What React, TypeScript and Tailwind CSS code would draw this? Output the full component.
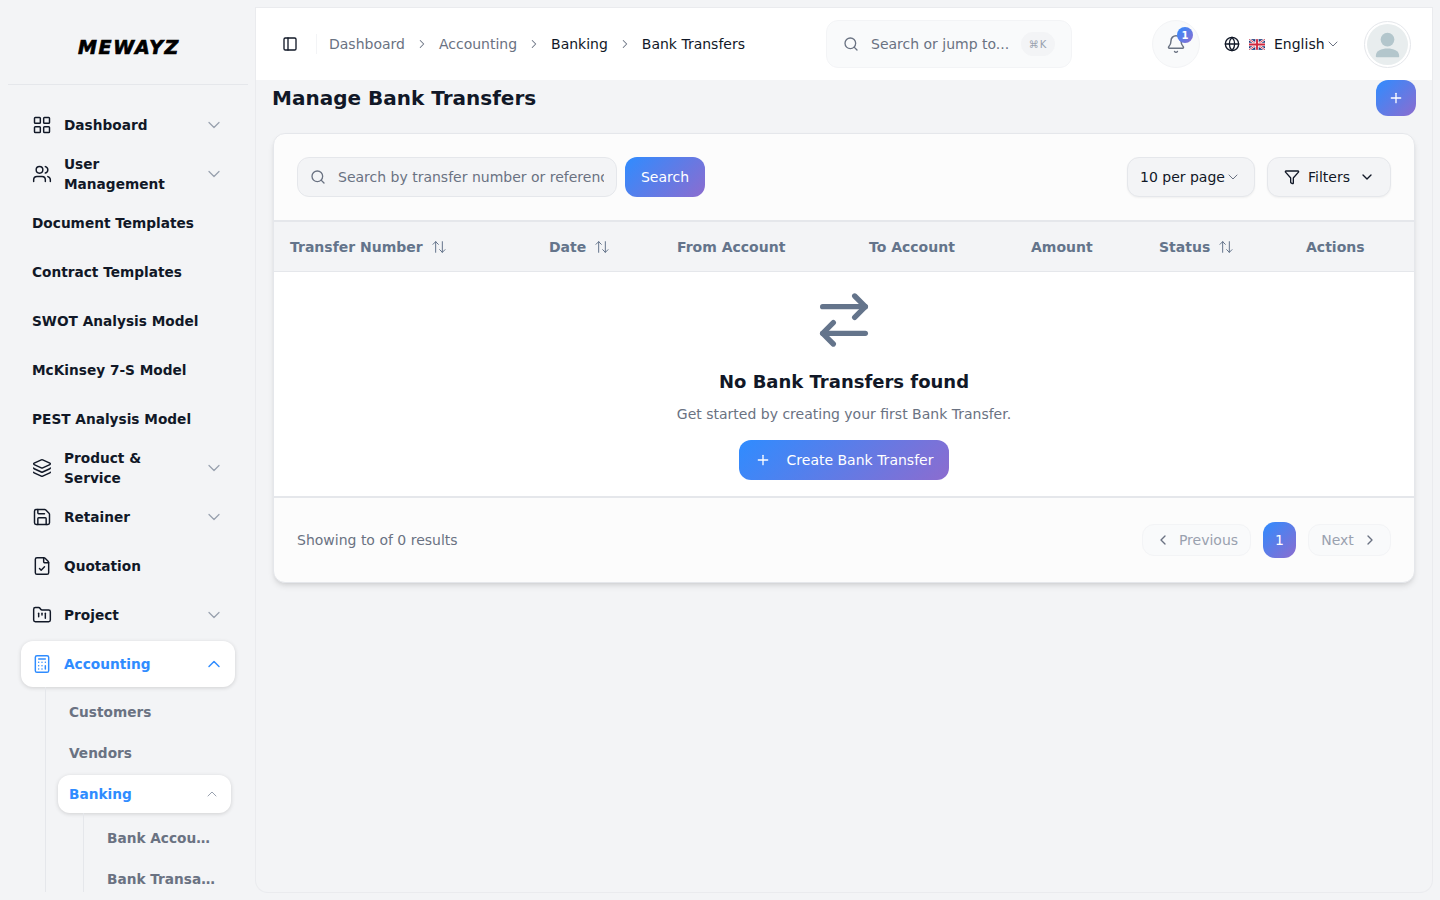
import {
  ArrowRightLeft,
  ArrowUpDown,
  Bell,
  Calculator,
  ChevronDown,
  ChevronLeft,
  ChevronRight,
  ChevronUp,
  FileCheck,
  FolderKanban,
  Funnel,
  Globe,
  Layers,
  LayoutGrid,
  PanelLeft,
  Plus,
  Save,
  Search,
  Users,
} from 'lucide-react';
import type { ReactNode } from 'react';

const gradient = 'bg-[linear-gradient(135deg,#2f8cff,#8c6ccf)]';

const NavItem = ({ icon, label, chevron, narrow }: { icon?: ReactNode; label: string; chevron?: boolean; narrow?: boolean }) => (
  <div className="flex h-[46px] items-center px-[11px] mb-[3px]">
    {icon && <span className="mr-3 flex w-5 shrink-0 justify-center text-[#111827]">{icon}</span>}
    <span className={`text-[13.7px] font-bold leading-5 text-[#111827] ${narrow ? 'w-[110px]' : ''}`}>{label}</span>
    {chevron && <ChevronDown className="ml-auto size-5 text-gray-400" strokeWidth={1.5} />}
  </div>
);

const Sidebar = () => (
  <aside className="flex h-[892px] w-[256px] shrink-0 flex-col overflow-hidden">
    <div className="mx-2 flex h-[85px] shrink-0 items-center justify-center border-b border-gray-200 pt-[10px]">
      <span className="pl-[2px] text-[19px] font-bold italic leading-none tracking-[1.6px] text-black [-webkit-text-stroke:0.7px_black]">MEWAYZ</span>
    </div>
    <nav className="px-[21px] pt-[17px]">
      <NavItem icon={<LayoutGrid className="size-5" strokeWidth={1.75} />} label="Dashboard" chevron />
      <NavItem icon={<Users className="size-5" strokeWidth={1.75} />} label="User Management" chevron narrow />
      <NavItem label="Document Templates" />
      <NavItem label="Contract Templates" />
      <NavItem label="SWOT Analysis Model" />
      <NavItem label="McKinsey 7-S Model" />
      <NavItem label="PEST Analysis Model" />
      <NavItem icon={<Layers className="size-5" strokeWidth={1.75} />} label="Product & Service" chevron narrow />
      <NavItem icon={<Save className="size-5" strokeWidth={1.75} />} label="Retainer" chevron />
      <NavItem icon={<FileCheck className="size-5" strokeWidth={1.75} />} label="Quotation" />
      <NavItem icon={<FolderKanban className="size-5" strokeWidth={1.75} />} label="Project" chevron />
      <div className="flex h-[46px] items-center rounded-xl bg-white px-[11px] shadow-[0_1px_4px_rgba(0,0,0,0.15)]">
        <Calculator className="mr-3 size-5 text-[#2f8cff]" strokeWidth={1.75} />
        <span className="text-[13.7px] font-bold text-[#2f8cff]">Accounting</span>
        <ChevronUp className="ml-auto size-5 text-[#2f8cff]" strokeWidth={1.75} />
      </div>
      <div className="ml-[24px] border-l border-gray-200 pt-[6px] pl-3">
        <div className="mb-[3px] flex h-[38px] items-center pl-[11px] text-[13.7px] font-bold text-gray-500">Customers</div>
        <div className="mb-[3px] flex h-[38px] items-center pl-[11px] text-[13.7px] font-bold text-gray-500">Vendors</div>
        <div className="flex h-[38px] w-[173px] items-center rounded-xl bg-white pl-[11px] shadow-[0_1px_4px_rgba(0,0,0,0.15)]">
          <span className="text-[13.7px] font-bold text-[#2f8cff]">Banking</span>
          <ChevronUp className="ml-auto mr-[11px] size-4 text-gray-400" strokeWidth={1.5} />
        </div>
        <div className="ml-[25px] border-l border-gray-200 pt-[6px] pl-[23px]">
          <div className="mb-[3px] flex h-[38px] w-[108px] items-center text-[13.7px] font-bold text-gray-500">
            <span className="truncate">Bank Accounts</span>
          </div>
          <div className="flex h-[38px] w-[108px] items-center text-[13.7px] font-bold text-gray-500">
            <span className="truncate">Bank Transactions</span>
          </div>
        </div>
      </div>
    </nav>
  </aside>
);

const UkFlag = () => (
  <svg viewBox="0 0 60 40" className="h-[11px] w-4 rounded-[1px]">
    <rect width="60" height="40" fill="#1f3a7a" />
    <path d="M0 0 60 40M60 0 0 40" stroke="#fff" strokeWidth="8" />
    <path d="M0 0 60 40M60 0 0 40" stroke="#d0263c" strokeWidth="3" />
    <path d="M30 0v40M0 20h60" stroke="#fff" strokeWidth="13" />
    <path d="M30 0v40M0 20h60" stroke="#d0263c" strokeWidth="7" />
  </svg>
);

const Header = () => (
  <header className="flex h-[72px] shrink-0 items-center bg-white pl-[26px]">
    <PanelLeft className="size-4 shrink-0 text-[#111827]" />
    <div className="ml-[18px] h-5 border-l border-gray-100" />
    <div className="ml-3 flex w-[416px] shrink-0 items-center whitespace-nowrap text-sm text-[#111827]">
      <span className="text-gray-500">Dashboard</span>
      <ChevronRight className="mx-[9px] size-4 p-px text-gray-500" strokeWidth={1.75} />
      <span className="text-gray-500">Accounting</span>
      <ChevronRight className="mx-[9px] size-4 p-px text-gray-500" strokeWidth={1.75} />
      <span>Banking</span>
      <ChevronRight className="mx-[9px] size-4 p-px text-gray-500" strokeWidth={1.75} />
      <span>Bank Transfers</span>
    </div>
    <div className="ml-[81px] flex h-12 w-[246px] shrink-0 items-center rounded-xl border border-gray-100 bg-gray-50 px-4">
      <Search className="size-4 shrink-0 text-gray-500" />
      <span className="ml-3 whitespace-nowrap text-sm text-gray-500">Search or jump to...</span>
      <span className="ml-auto flex h-6 w-[34px] items-center justify-center rounded-full border border-gray-100 bg-gray-100 text-[10px] tracking-[1px] text-gray-400">⌘K</span>
    </div>
    <div className="relative ml-20 flex size-12 shrink-0 items-center justify-center rounded-full border border-gray-100 bg-gray-50">
      <Bell className="size-5 text-gray-500" strokeWidth={1.75} />
      <span className={`absolute right-[6px] top-[6px] flex size-4 items-center justify-center rounded-full text-[10px] font-bold text-white ${gradient}`}>1</span>
    </div>
    <Globe className="ml-6 size-4 shrink-0 text-[#111827]" />
    <span className="ml-[9px]"><UkFlag /></span>
    <span className="ml-[9px] text-sm text-[#111827]">English</span>
    <ChevronDown className="size-4 shrink-0 text-gray-500" strokeWidth={1.5} />
    <div className="ml-[23px] flex size-[47px] shrink-0 items-center justify-center rounded-full border border-gray-200 bg-white">
      <svg viewBox="0 0 42 42" className="size-[41px] rounded-full">
        <rect width="42" height="42" fill="#e8edee" />
        <circle cx="21" cy="16" r="7" fill="#b3c6cc" />
        <path d="M9 33c0-6 6-8 12-8s12 2 12 8c0 .6-.4 1-1 1H10c-.6 0-1-.4-1-1Z" fill="#b3c6cc" />
      </svg>
    </div>
  </header>
);

const Th = ({ label, sortable, className }: { label: string; sortable?: boolean; className: string }) => (
  <div className={`flex items-center gap-2 text-sm font-bold text-[#64748b] ${className}`}>
    {label}
    {sortable && <ArrowUpDown className="size-4" strokeWidth={1.5} />}
  </div>
);

const Toolbar = () => (
  <div className="flex h-[86px] items-center px-[23px]">
    <div className="flex h-10 w-[320px] items-center rounded-xl border border-gray-200 bg-gray-100 px-3">
      <Search className="size-4 shrink-0 text-gray-500" />
      <input
        readOnly
        placeholder="Search by transfer number or reference..."
        className="ml-3 w-full bg-transparent text-sm outline-none placeholder:text-gray-500"
      />
    </div>
    <button className={`ml-2 h-10 w-20 rounded-xl text-sm text-white ${gradient}`}>Search</button>
    <div className="ml-auto flex h-10 w-[128px] items-center rounded-xl border border-gray-200 bg-gray-100 pl-3 text-sm text-[#111827] shadow-xs">
      10 per page
      <ChevronDown className="size-4 text-gray-500" strokeWidth={1.5} />
    </div>
    <div className="ml-3 flex h-10 w-[124px] items-center rounded-xl border border-gray-200 bg-gray-100 pl-4 text-sm text-[#111827] shadow-xs">
      <Funnel className="size-4" />
      <span className="ml-2">Filters</span>
      <ChevronDown className="ml-[9px] size-4" />
    </div>
  </div>
);

const Table = () => (
  <div className="border-y-2 border-gray-200">
    <div className="flex h-[50px] items-center border-b border-gray-200 bg-gray-100 pl-4">
      <Th label="Transfer Number" sortable className="w-[259px]" />
      <Th label="Date" sortable className="w-[128px]" />
      <Th label="From Account" className="w-[192px]" />
      <Th label="To Account" className="w-[162px]" />
      <Th label="Amount" className="w-[128px]" />
      <Th label="Status" sortable className="w-[147px]" />
      <Th label="Actions" className="w-[90px]" />
    </div>
    <div className="flex flex-col items-center bg-white pb-4 pt-4">
      <ArrowRightLeft className="size-16 text-[#64748b]" />
      <h3 className="mt-4 text-lg font-bold leading-7 text-[#111827]">No Bank Transfers found</h3>
      <p className="mt-2 text-sm text-gray-500">Get started by creating your first Bank Transfer.</p>
      <button className={`mt-4 flex h-10 w-[210px] items-center justify-center rounded-xl text-sm text-white ${gradient}`}>
        <Plus className="size-4" />
        <span className="ml-4">Create Bank Transfer</span>
      </button>
    </div>
  </div>
);

const Pagination = () => (
  <div className="flex h-[84px] items-center px-[23px]">
    <span className="text-sm text-gray-500">Showing to of 0 results</span>
    <div className="ml-auto flex h-8 w-[109px] items-center justify-center rounded-xl border border-gray-100 bg-gray-50 text-sm text-gray-400">
      <ChevronLeft className="size-4 text-gray-500" />
      <span className="ml-2">Previous</span>
    </div>
    <div className={`ml-3 flex h-9 w-[33px] items-center justify-center rounded-xl text-sm text-white ${gradient}`}>1</div>
    <div className="ml-3 flex h-8 w-[83px] items-center justify-center rounded-xl border border-gray-100 bg-gray-50 text-sm text-gray-400">
      <span className="mr-2">Next</span>
      <ChevronRight className="size-4 text-gray-500" />
    </div>
  </div>
);

const App = () => (
  <div className="flex h-[900px] overflow-hidden bg-[#f3f4f6] font-['DejaVu_Sans',sans-serif]">
    <Sidebar />
    <main className="my-2 mr-2 flex h-[884px] w-[1176px] flex-col overflow-hidden rounded-b-xl bg-[#f3f4f6] ring-1 ring-gray-200/70">
      <Header />
      <div className="pl-4 pr-4">
        <div className="flex h-9 items-center justify-between">
          <h1 className="text-xl font-bold text-[#111827]">Manage Bank Transfers</h1>
          <button className={`flex h-9 w-10 items-center justify-center rounded-xl text-white ${gradient}`}>
            <Plus className="size-4" />
          </button>
        </div>
        <section className="ml-px mt-[17px] w-[1142px] overflow-hidden rounded-xl border border-gray-200 bg-[#fcfcfc] shadow-md">
          <Toolbar />
          <Table />
          <Pagination />
        </section>
      </div>
    </main>
  </div>
);

export default App;
